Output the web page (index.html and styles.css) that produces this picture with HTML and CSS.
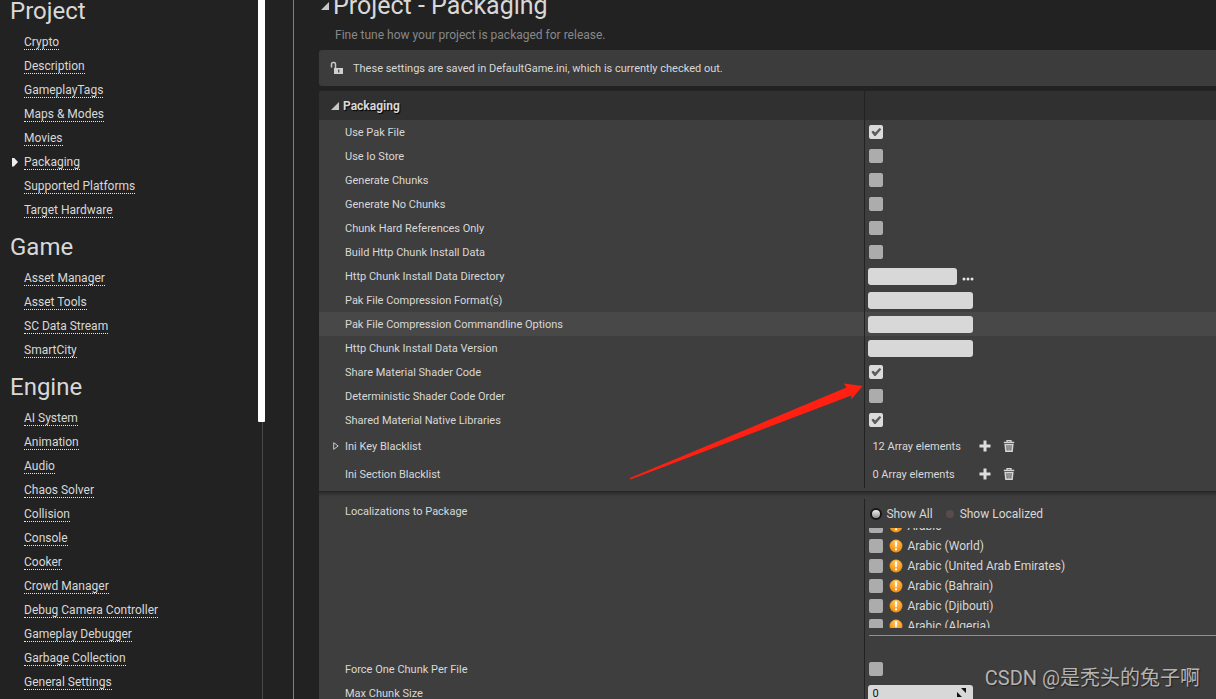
FILE: index.html
```html
<!DOCTYPE html>
<html lang="en">
<head>
<meta charset="utf-8">
<title>Project Settings - Packaging</title>
<link rel="stylesheet" href="styles.css">
</head>
<body>
<svg class="defs" aria-hidden="true">
  <defs>
    <radialGradient id="amber" cx="50%" cy="25%" r="75%">
      <stop offset="0" stop-color="#ffc562"/>
      <stop offset="0.6" stop-color="#fba026"/>
      <stop offset="1" stop-color="#ea8a10"/>
    </radialGradient>
    <symbol id="warn" viewBox="0 0 14 14">
      <circle cx="7" cy="7" r="6.4" fill="url(#amber)"/>
      <path d="M5.9 2.2h2.2l-.4 6h-1.4z" fill="#fff"/>
      <circle cx="7" cy="10.4" r="1.1" fill="#fff"/>
    </symbol>
    <symbol id="plus" viewBox="0 0 12 12">
      <path d="M4.5 .5h3v4h4v3h-4v4h-3v-4h-4v-3h4z" fill="#dedede"/>
    </symbol>
    <symbol id="trash" viewBox="0 0 12 12">
      <path d="M.8 2.5h10.4M4 2V.7h4V2" fill="none" stroke="#d6d6d6" stroke-width="1.3"/>
      <path d="M1.4 4h9.2l-.8 8H2.2z" fill="#d6d6d6"/>
      <path d="M3.9 5l.3 5.5M6 5v5.500M8.100 5l-.3 5.500" stroke="#3e3e3e" stroke-width=".9"/>
    </symbol>
  </defs>
</svg>
<div class="app">
  <aside class="sidebar">
    <nav class="nav">
      <section>
        <h2>Project</h2>
        <ul>
          <li><a href="#">Crypto</a></li>
          <li><a href="#">Description</a></li>
          <li><a href="#">GameplayTags</a></li>
          <li><a href="#">Maps &amp; Modes</a></li>
          <li><a href="#">Movies</a></li>
          <li class="current"><a href="#" aria-current="page">Packaging</a></li>
          <li><a href="#">Supported Platforms</a></li>
          <li><a href="#">Target Hardware</a></li>
        </ul>
      </section>
      <section>
        <h2>Game</h2>
        <ul>
          <li><a href="#">Asset Manager</a></li>
          <li><a href="#">Asset Tools</a></li>
          <li><a href="#">SC Data Stream</a></li>
          <li><a href="#">SmartCity</a></li>
        </ul>
      </section>
      <section>
        <h2>Engine</h2>
        <ul>
          <li><a href="#">AI System</a></li>
          <li><a href="#">Animation</a></li>
          <li><a href="#">Audio</a></li>
          <li><a href="#">Chaos Solver</a></li>
          <li><a href="#">Collision</a></li>
          <li><a href="#">Console</a></li>
          <li><a href="#">Cooker</a></li>
          <li><a href="#">Crowd Manager</a></li>
          <li><a href="#">Debug Camera Controller</a></li>
          <li><a href="#">Gameplay Debugger</a></li>
          <li><a href="#">Garbage Collection</a></li>
          <li><a href="#">General Settings</a></li>
        </ul>
      </section>
    </nav>
    <div class="scrollbar"><div class="thumb"></div></div>
  </aside>
  <main class="main">
    <header class="page-head">
      <h1><svg class="tri" viewBox="0 0 8 8"><path d="M8 0v8H0z" fill="#c8c8c8"/></svg>Project - Packaging</h1>
      <p>Fine tune how your project is packaged for release.</p>
    </header>
    <div class="notice">
      <svg class="lock" viewBox="0 0 14 14"><path d="M1.500 6.500V3a1.500 1.500 0 0 1 1.500-1.500h1A1.500 1.500 0 0 1 5.500 3v4" fill="none" stroke="#c8c8c8" stroke-width="1.500"/><path d="M4 7h9v6H4z" fill="#d0d0d0"/><path d="M8 8.500h1.400v3H8z" fill="#555"/></svg>
      <span>These settings are saved in DefaultGame.ini, which is currently checked out.</span>
    </div>
    <section class="panel">
      <div class="row head">
        <h3 class="name"><svg class="tri" viewBox="0 0 8 8"><path d="M8 0v8H0z" fill="#c8c8c8"/></svg>Packaging</h3>
        <div class="value"></div>
      </div>
      <div class="row"><label class="name" for="c1">Use Pak File</label><div class="value"><input type="checkbox" id="c1" checked></div></div>
      <div class="row"><label class="name" for="c2">Use Io Store</label><div class="value"><input type="checkbox" id="c2"></div></div>
      <div class="row"><label class="name" for="c3">Generate Chunks</label><div class="value"><input type="checkbox" id="c3"></div></div>
      <div class="row"><label class="name" for="c4">Generate No Chunks</label><div class="value"><input type="checkbox" id="c4"></div></div>
      <div class="row"><label class="name" for="c5">Chunk Hard References Only</label><div class="value"><input type="checkbox" id="c5"></div></div>
      <div class="row"><label class="name" for="c6">Build Http Chunk Install Data</label><div class="value"><input type="checkbox" id="c6"></div></div>
      <div class="row"><label class="name" for="t1">Http Chunk Install Data Directory</label><div class="value"><input type="text" class="field short" id="t1"><button class="browse" type="button" aria-label="Browse"><svg viewBox="0 0 12 4"><circle cx="2" cy="2" r="1.500"/><circle cx="6" cy="2" r="1.500"/><circle cx="10" cy="2" r="1.500"/></svg></button></div></div>
      <div class="row"><label class="name" for="t2">Pak File Compression Format(s)</label><div class="value"><input type="text" class="field" id="t2"></div></div>
      <div class="row hover"><label class="name" for="t3">Pak File Compression Commandline Options</label><div class="value"><input type="text" class="field" id="t3"></div></div>
      <div class="row"><label class="name" for="t4">Http Chunk Install Data Version</label><div class="value"><input type="text" class="field" id="t4"></div></div>
      <div class="row"><label class="name" for="c7">Share Material Shader Code</label><div class="value"><input type="checkbox" id="c7" checked></div></div>
      <div class="row"><label class="name" for="c8">Deterministic Shader Code Order</label><div class="value"><input type="checkbox" id="c8"></div></div>
      <div class="row"><label class="name" for="c9">Shared Material Native Libraries</label><div class="value"><input type="checkbox" id="c9" checked></div></div>
      <div class="row array">
        <div class="name"><svg class="expand" viewBox="0 0 6 8"><path d="M.7 .7v6.600L5.200 4z" fill="none" stroke="#c8c8c8"/></svg>Ini Key Blacklist</div>
        <div class="value"><span class="count">12 Array elements</span><button type="button" aria-label="Add element"><svg><use href="#plus"/></svg></button><button type="button" aria-label="Remove all elements"><svg><use href="#trash"/></svg></button></div>
      </div>
      <div class="row array">
        <div class="name">Ini Section Blacklist</div>
        <div class="value"><span class="count">0 Array elements</span><button type="button" aria-label="Add element"><svg><use href="#plus"/></svg></button><button type="button" aria-label="Remove all elements"><svg><use href="#trash"/></svg></button></div>
      </div>
      <div class="advanced"></div>
      <div class="row cultures">
        <div class="name">Localizations to Package</div>
        <div class="value">
          <div class="filter">
            <label><input type="radio" name="show" checked>Show All</label>
            <label><input type="radio" name="show">Show Localized</label>
          </div>
          <div class="list-frame">
            <div class="list">
              <label><input type="checkbox"><svg><use href="#warn"/></svg>Arabic</label>
              <label><input type="checkbox"><svg><use href="#warn"/></svg>Arabic (World)</label>
              <label><input type="checkbox"><svg><use href="#warn"/></svg>Arabic (United Arab Emirates)</label>
              <label><input type="checkbox"><svg><use href="#warn"/></svg>Arabic (Bahrain)</label>
              <label><input type="checkbox"><svg><use href="#warn"/></svg>Arabic (Djibouti)</label>
              <label><input type="checkbox"><svg><use href="#warn"/></svg>Arabic (Algeria)</label>
            </div>
          </div>
        </div>
      </div>
      <div class="row"><label class="name" for="c10">Force One Chunk Per File</label><div class="value"><input type="checkbox" id="c10"></div></div>
      <div class="row"><label class="name" for="t5">Max Chunk Size</label><div class="value"><div class="spin"><input type="text" class="field" id="t5" value="0"><svg viewBox="0 0 10 10"><path d="M4 0h5v5zM0 4l5 5H0z"/></svg></div></div></div>
    </section>
    <svg class="pointer" viewBox="0 0 236 104" aria-hidden="true"><path d="M1 100L217.500 9.500L215 5.500L233.500 8L222.300 21.500L222.300 17.500L1.500 101.500z" transform="translate(0 -1)" fill="#ff2012"/></svg>
  </main>
</div>
<div class="watermark">CSDN @是秃头的兔子啊</div>
</body>
</html>
```

FILE: styles.css
```css
* { box-sizing: border-box; }

body {
  margin: 0;
  background: #222;
  color: #d8d8d8;
  font-family: Roboto, "Noto Sans CJK SC", sans-serif;
  font-size: 11px;
  overflow: hidden;
}

h1, h2, h3, p, ul { margin: 0; padding: 0; font-weight: 400; }
ul { list-style: none; }
button { border: 0; padding: 0; background: none; }
.defs { position: absolute; width: 0; height: 0; }

.app { display: flex; height: 100vh; overflow: hidden; }

/* Sidebar */
.sidebar {
  display: flex;
  flex: none;
  width: 294px;
  padding-right: 28px;
  border-right: 1px solid #808080;
}
.nav { flex: 1; margin-top: -14px; font-size: 12px; }
.nav h2 { padding: 6px 0 0 10px; font-size: 24px; line-height: 38px; }
.nav li { display: flex; align-items: center; height: 24px; padding-left: 24px; }
.nav a {
  color: inherit;
  text-decoration: none;
  line-height: 14px;
  border-bottom: 1px dotted #e8e8e8;
}
.nav .current { padding-left: 12px; }
.nav .current::before {
  content: "";
  width: 6px;
  height: 9px;
  margin-right: 6px;
  background: #eee;
  clip-path: polygon(0 0, 30% 0, 100% 50%, 30% 100%, 0 100%);
}
.scrollbar {
  width: 7px;
  background: linear-gradient(#484848, #484848) 4px 0 / 1px 100% no-repeat;
}
.thumb { height: 422px; background: #fff; border-radius: 0 0 1px 1px; }

/* Main column */
.main { position: relative; flex: 1; min-width: 0; padding-left: 25px; }
.page-head { display: flow-root; height: 50px; }
.page-head h1 {
  display: flex;
  align-items: center;
  margin-top: -10px;
  padding-left: 2px;
  font-size: 25px;
  line-height: 32px;
}
.tri { flex: none; width: 8px; height: 8px; margin-right: 4px; }
.page-head p { padding: 5px 0 0 16px; color: #888; font-size: 12px; line-height: 16px; }
.notice {
  display: flex;
  align-items: center;
  height: 36px;
  margin-bottom: 5px;
  padding-left: 11px;
  background: #3c3c3c;
  border-radius: 3px 0 0 3px;
}
.lock { width: 14px; height: 14px; margin-right: 9px; }

.panel { background: #3e3e3e; border-radius: 3px 0 0 0; }
.row {
  display: grid;
  grid-template-columns: 60.8% minmax(0, 1fr);
  min-height: 24px;
}
.name { display: flex; align-items: center; padding-left: 26px; }
.value {
  display: flex;
  align-items: center;
  padding-left: 4px;
  border-left: 1px solid #222;
}
.head { min-height: 29px; background: #303030; border-radius: 3px 0 0 0; }
.head .name {
  padding-left: 12px;
  font-size: 12px;
  font-weight: 700;
  text-shadow: 1px 1px 1px #000;
}
.hover { background: #484848; }
.array { min-height: 28px; }
.expand { width: 6px; height: 8px; margin: 0 6px 0 -12px; }
.count { width: 110px; padding-left: 3px; }
.array button { width: 12px; height: 12px; margin-right: 12px; }
.array button svg { display: block; width: 12px; height: 12px; }

/* Controls */
input[type="checkbox"] {
  appearance: none;
  flex: none;
  width: 14px;
  height: 14px;
  margin: 0;
  border-radius: 2px;
  background: #acacac;
}
input[type="checkbox"]:checked {
  background: #dcdcdc;
}
input[type="checkbox"]:checked::before {
  content: "";
  display: block;
  width: 10px;
  height: 8px;
  margin: 3px 2px;
  background: #5c5c5c;
  clip-path: polygon(0 50%, 18% 32%, 38% 55%, 82% 0, 100% 16%, 42% 100%, 30% 100%);
}
.field {
  width: 105px;
  height: 17px;
  margin-left: -1px;
  padding: 0 4px;
  border: 0;
  border-radius: 3px;
  background: #d8d8d8;
  color: #111;
  font: inherit;
}
.short { width: 89px; }
.browse { width: 12px; height: 4px; margin: 6px 0 0 5px; }
.browse svg { display: block; width: 12px; height: 4px; fill: #e6e6e6; }
.spin { display: flex; align-items: center; }
.spin svg { width: 10px; height: 10px; margin-left: -16px; fill: #111; }

/* Localization list */
.advanced {
  height: 11px;
  background: linear-gradient(#3e3e3e 3px, #222 3px, #303030 5px, #3e3e3e 9px);
}
.cultures { min-height: 158px; font-size: 12px; }
.cultures .name { align-items: flex-start; padding-top: 6px; font-size: 11px; }
.cultures .value { display: block; }
.filter { display: flex; gap: 10px; height: 29px; }
.filter label { display: flex; align-items: center; }
.filter input {
  appearance: none;
  width: 12px;
  height: 12px;
  margin: 0 4px 0 1px;
  border: 2px solid #3e3e3e;
  border-radius: 50%;
  background: #574b4b;
}
.filter input:checked {
  border-color: #161616;
  background: linear-gradient(#f0f0f0, #909090);
}
.list-frame { padding-bottom: 7px; border-bottom: 1px solid #909090; }
.list { height: 100px; overflow: hidden; }
.list label { display: flex; align-items: center; height: 20px; }
.list label:first-child { margin-top: -12px; }
.list svg { width: 14px; height: 14px; margin: 0 4px 0 6px; }

/* Overlays */
.pointer { position: absolute; left: 335px; top: 379px; width: 236px; height: 104px; }
.watermark {
  position: absolute;
  right: 16px;
  bottom: 6px;
  color: #b4b4b4;
  font-size: 20px;
  line-height: 30px;
  text-shadow: 1px 1px 1px #222;
}
```
